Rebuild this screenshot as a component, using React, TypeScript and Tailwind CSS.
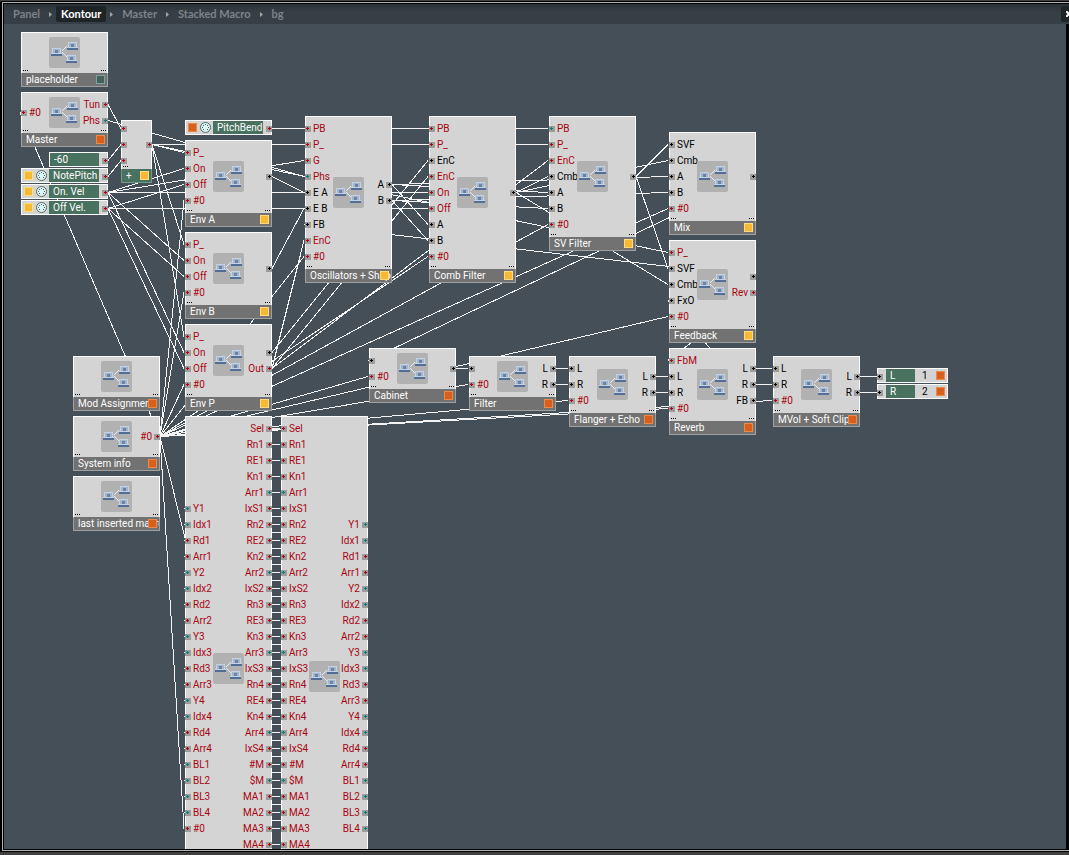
import clsx from "clsx";

type Color = "r" | "k" | "t";
type Side = "in" | "out";

interface Port {
  label: string;
  color: Color;
}

interface Macro {
  id: string;
  title: string;
  x: number;
  y: number;
  body: number;
  lamp: "yellow" | "orange" | "off";
  ins: Port[];
  outs: Port[];
}

interface Terminal {
  id: string;
  label: string;
  x: number;
  y: number;
  lamp?: "yellow" | "orange";
}

// "r:PB k:A t:Phs" -> list of ports, "~" is a blank inside a label
function ports(text: string): Port[] {
  return text
    .split(" ")
    .filter(Boolean)
    .map((item) => {
      const [color, label] = item.split(":");
      return { color: color as Color, label: label.replace("~", " ") };
    });
}

const groups = [1, 2, 3, 4];
const bankLine = "t:BL1 t:BL2 t:BL3 t:BL4";
const rows = groups.map((n) => `t:Y${n} t:Idx${n} r:Rd${n} r:Arr${n}`).join(" ");
const bus =
  "r:Sel " +
  groups.map((n) => `r:Rn${n} r:RE${n} r:Kn${n} t:Arr${n} r:IxS${n}`).join(" ") +
  " r:#M t:$M r:MA1 r:MA2 r:MA3 r:MA4 r: r: r: r:";

const macros: Macro[] = [
  { id: "ph", title: "placeholder", x: 21, y: 32, body: 41, lamp: "off", ins: [], outs: [] },
  { id: "master", title: "Master", x: 21, y: 92, body: 41, lamp: "orange", ins: ports("r:#0"), outs: ports("r:Tun t:Phs") },
  { id: "envA", title: "Env A", x: 185, y: 140, body: 73, lamp: "yellow", ins: ports("r:P_ r:On r:Off r:#0"), outs: ports("k:") },
  { id: "envB", title: "Env B", x: 185, y: 232, body: 73, lamp: "yellow", ins: ports("r:P_ r:On r:Off r:#0"), outs: ports("k:") },
  { id: "envP", title: "Env P", x: 185, y: 324, body: 73, lamp: "yellow", ins: ports("r:P_ r:On r:Off r:#0"), outs: ports("k: r:Out") },
  { id: "osc", title: "Oscillators + Shape", x: 305, y: 116, body: 153, lamp: "yellow", ins: ports("r:PB r:P_ r:G t:Phs k:E~A k:E~B k:FB r:EnC r:#0"), outs: ports("k:A k:B") },
  { id: "comb", title: "Comb Filter", x: 429, y: 116, body: 153, lamp: "yellow", ins: ports("r:PB r:P_ k:EnC r:EnC r:On r:Off k:A k:B r:#0"), outs: ports("k:") },
  { id: "svf", title: "SV Filter", x: 549, y: 116, body: 121, lamp: "yellow", ins: ports("t:PB r:P_ r:EnC k:Cmb k:A k:B r:#0"), outs: ports("k:") },
  { id: "mix", title: "Mix", x: 669, y: 132, body: 89, lamp: "yellow", ins: ports("k:SVF k:Cmb k:A k:B r:#0"), outs: ports("k:") },
  { id: "fb", title: "Feedback", x: 669, y: 240, body: 89, lamp: "yellow", ins: ports("r:P_ k:SVF k:Cmb k:FxO r:#0"), outs: ports("k: r:Rev") },
  { id: "cab", title: "Cabinet", x: 369, y: 348, body: 41, lamp: "orange", ins: ports("k: r:#0"), outs: ports("k:") },
  { id: "filter", title: "Filter", x: 469, y: 356, body: 41, lamp: "orange", ins: ports("k: r:#0"), outs: ports("k:L k:R") },
  { id: "flanger", title: "Flanger + Echo", x: 569, y: 356, body: 57, lamp: "orange", ins: ports("k:L k:R r:#0"), outs: ports("k:L k:R") },
  { id: "reverb", title: "Reverb", x: 669, y: 348, body: 73, lamp: "orange", ins: ports("r:FbM k:L k:R r:#0"), outs: ports("k:L k:R k:FB") },
  { id: "mvol", title: "MVol + Soft Clip", x: 773, y: 356, body: 57, lamp: "orange", ins: ports("k:L k:R r:#0"), outs: ports("k:L k:R") },
  { id: "mod", title: "Mod Assignment", x: 73, y: 356, body: 41, lamp: "orange", ins: [], outs: [] },
  { id: "sys", title: "System info", x: 73, y: 416, body: 41, lamp: "orange", ins: [], outs: ports("r:#0") },
  { id: "last", title: "last inserted macro", x: 73, y: 476, body: 41, lamp: "orange", ins: [], outs: [] },
  { id: "bankA", title: "", x: 185, y: 416, body: 505, lamp: "orange", ins: ports(`${rows} ${bankLine} r:#0`), outs: ports(bus) },
  { id: "bankB", title: "", x: 281, y: 416, body: 521, lamp: "orange", ins: ports(`${bus} r:`), outs: ports(`${rows} ${bankLine}`) },
];

const sources: Terminal[] = [
  { id: "const", label: "-60", x: 49, y: 152 },
  { id: "note", label: "NotePitch", x: 21, y: 168, lamp: "yellow" },
  { id: "on", label: "On. Vel", x: 21, y: 184, lamp: "yellow" },
  { id: "off", label: "Off Vel.", x: 21, y: 200, lamp: "yellow" },
  { id: "bend", label: "PitchBend", x: 185, y: 120, lamp: "orange" },
];

const sinks = [
  { id: "outL", label: "L", channel: 1, x: 877, y: 368 },
  { id: "outR", label: "R", channel: 2, x: 877, y: 384 },
];

// from, output index, to, input index
const wires: [string, number, string, number][] = [
  ["master", 0, "add", 0],
  ["master", 1, "osc", 3],
  ["const", 0, "add", 1],
  ["note", 0, "add", 2],
  ["add", 0, "osc", 1],
  ["add", 0, "comb", 1],
  ["add", 0, "svf", 1],
  ["add", 0, "envA", 0],
  ["add", 0, "envB", 0],
  ["add", 0, "envP", 0],
  ["add", 0, "fb", 0],
  ["on", 0, "envA", 1],
  ["on", 0, "envB", 1],
  ["on", 0, "envP", 1],
  ["on", 0, "osc", 2],
  ["on", 0, "comb", 4],
  ["off", 0, "envA", 2],
  ["off", 0, "envB", 2],
  ["off", 0, "envP", 2],
  ["off", 0, "comb", 5],
  ["bend", 0, "osc", 0],
  ["bend", 0, "comb", 0],
  ["bend", 0, "svf", 0],
  ["envA", 0, "osc", 4],
  ["envB", 0, "osc", 5],
  ["envP", 0, "comb", 2],
  ["envP", 1, "osc", 7],
  ["envP", 1, "comb", 3],
  ["envP", 1, "svf", 2],
  ["osc", 0, "comb", 6],
  ["osc", 0, "svf", 4],
  ["osc", 0, "mix", 2],
  ["osc", 1, "comb", 7],
  ["osc", 1, "svf", 5],
  ["osc", 1, "mix", 3],
  ["comb", 0, "svf", 3],
  ["comb", 0, "mix", 1],
  ["comb", 0, "fb", 2],
  ["svf", 0, "mix", 0],
  ["svf", 0, "fb", 1],
  ["mix", 0, "cab", 0],
  ["fb", 0, "osc", 6],
  ["fb", 1, "reverb", 0],
  ["cab", 0, "filter", 0],
  ["filter", 0, "flanger", 0],
  ["filter", 1, "flanger", 1],
  ["flanger", 0, "reverb", 1],
  ["flanger", 1, "reverb", 2],
  ["reverb", 0, "mvol", 0],
  ["reverb", 1, "mvol", 1],
  ["reverb", 2, "fb", 3],
  ["mvol", 0, "outL", 0],
  ["mvol", 1, "outR", 0],
  ["sys", 0, "master", 0],
  ["sys", 0, "envA", 3],
  ["sys", 0, "envB", 3],
  ["sys", 0, "envP", 3],
  ["sys", 0, "osc", 8],
  ["sys", 0, "comb", 8],
  ["sys", 0, "svf", 6],
  ["sys", 0, "mix", 4],
  ["sys", 0, "fb", 4],
  ["sys", 0, "cab", 1],
  ["sys", 0, "filter", 1],
  ["sys", 0, "flanger", 2],
  ["sys", 0, "reverb", 3],
  ["sys", 0, "mvol", 2],
  ["sys", 0, "bankA", 20],
  ["sys", 0, "bankB", 31],
];

for (let i = 0; i < 31; i++) wires.push(["bankA", i, "bankB", i]);
for (let i = 0; i < 20; i++) wires.push(["bankB", i, "bankA", i]);

const MACRO_WIDTH = 87;

function portPosition(id: string, side: Side, index: number) {
  const macro = macros.find((m) => m.id === id);
  if (macro) {
    const count = side === "in" ? macro.ins.length : macro.outs.length;
    return {
      x: side === "in" ? macro.x - 1 : macro.x + MACRO_WIDTH,
      y: macro.y + macro.body / 2 + (index - (count - 1) / 2) * 16,
    };
  }
  if (id === "add") {
    return side === "in" ? { x: 121, y: 128.5 + index * 16 } : { x: 152, y: 144.5 };
  }
  const source = sources.find((s) => s.id === id);
  if (source) {
    return { x: source.lamp ? source.x + MACRO_WIDTH : 108, y: source.y + 8.5 };
  }
  const sink = sinks.find((s) => s.id === id);
  return { x: sink ? sink.x : 0, y: sink ? sink.y + 8.5 : 0 };
}

function Jack({ color, side }: { color: Color; side: Side }) {
  return (
    <svg
      className={clsx(
        "size-[6px] shrink-0",
        side === "out" && "-scale-x-100",
        color === "r" && "text-[#b4000e]",
        color === "k" && "text-black",
        color === "t" && "text-[#00807c]"
      )}
      viewBox="0 0 6 6"
      aria-hidden="true"
    >
      <rect width="6" height="6" fill="#9c9c9c" />
      <rect x="2" y="1" width="1" height="3" fill="currentColor" />
      <rect x="1" y="2" width="3" height="1" fill="currentColor" />
    </svg>
  );
}

function PortColumn({ items, side }: { items: Port[]; side: Side }) {
  return (
    <ul className={clsx("flex flex-col justify-center", side === "out" && "items-end")}>
      {items.map((port, i) => (
        <li
          key={i}
          className={clsx(
            "flex h-4 items-center gap-[2px] whitespace-nowrap",
            side === "out" && "flex-row-reverse",
            port.color === "k" ? "text-black" : "text-[#a80510]"
          )}
        >
          <Jack color={port.color} side={side} />
          <span>{port.label}</span>
        </li>
      ))}
    </ul>
  );
}

function Lamp({ color }: { color: "yellow" | "orange" | "off" }) {
  return (
    <span
      className={clsx(
        "size-[9px] shrink-0 border",
        color === "yellow" && "border-[#ffdc82] bg-[#f5b935]",
        color === "orange" && "border-[#ea8a4c] bg-[#d85f1c]",
        color === "off" && "border-[#7aa59d] bg-[#47605c]"
      )}
    />
  );
}

function Computer({ x, y }: { x: number; y: number }) {
  return (
    <g transform={`translate(${x} ${y})`}>
      <rect x="1" width="9" height="6" fill="#c3d2e5" />
      <rect x="2" y="1" width="7" height="4" fill="#a3b5cc" />
      <rect x="4" y="2" width="3" height="3" fill="#6c82a2" />
      <rect y="5" width="11" height="1" fill="#c3d2e5" />
      <rect y="6" width="11" height="2" fill="#526d96" />
    </g>
  );
}

function MacroIcon() {
  return (
    <svg className="size-[31px] shrink-0 rounded-xs bg-[#b1b1b1]" viewBox="0 0 31 31" shapeRendering="crispEdges" aria-hidden="true">
      <path d="M13 14L18 9M13 15L18 20" stroke="#ececec" strokeWidth="1" fill="none" />
      <Computer x={2} y={11} />
      <Computer x={18} y={5} />
      <Computer x={17} y={18} />
    </svg>
  );
}

function Dots() {
  return (
    <svg className="h-px w-[5px]" viewBox="0 0 5 1" shapeRendering="crispEdges" aria-hidden="true">
      <path d="M0 0h1v1h-1zM2 0h1v1h-1zM4 0h1v1h-1z" />
    </svg>
  );
}

function Dial() {
  return (
    <svg className="size-[11px] shrink-0" viewBox="0 0 11 11" aria-hidden="true">
      <circle cx="5.5" cy="5.5" r="5" fill="#dcf4f2" stroke="#566a6c" strokeWidth="1" />
      <path d="M2 5h1v1h-1zM8 5h1v1h-1zM3 3h1v1h-1zM7 3h1v1h-1zM5 2h1v1h-1zM3 7h1v1h-1zM7 7h1v1h-1z" fill="#4b6466" />
    </svg>
  );
}

function MacroBox({ macro }: { macro: Macro }) {
  return (
    <article className="absolute w-[87px]" style={{ left: macro.x, top: macro.y }}>
      <div className="relative flex border border-b-0 border-white bg-[#d4d4d4]" style={{ height: macro.body }}>
        <div className="-mx-px flex flex-1 items-center justify-between">
          <PortColumn items={macro.ins} side="in" />
          <PortColumn items={macro.outs} side="out" />
        </div>
        <div className="absolute inset-x-0 -top-px bottom-0 flex items-center justify-center">
          <MacroIcon />
        </div>
        <div className="absolute inset-x-px bottom-[2px] flex justify-between">
          <Dots />
          <Dots />
        </div>
      </div>
      <header className="relative flex h-[14px] items-center overflow-hidden border border-t-0 border-[#a0a0a0] bg-[#727272] pl-1 text-white">
        <h2 className="whitespace-nowrap">{macro.title}</h2>
        <span className="absolute top-[2px] right-[2px] flex">
          <Lamp color={macro.lamp} />
        </span>
      </header>
    </article>
  );
}

function Adder() {
  return (
    <article className="absolute w-[31px]" style={{ left: 121, top: 120 }}>
      <div className="relative flex h-[49px] border border-b-0 border-white bg-[#d4d4d4]">
        <div className="-mx-px flex flex-1 items-center justify-between">
          <PortColumn items={ports("r: r: r:")} side="in" />
          <PortColumn items={ports("r:")} side="out" />
        </div>
        <div className="absolute bottom-[2px] left-px flex">
          <Dots />
        </div>
      </div>
      <header className="flex h-[14px] items-center justify-between border border-t-0 border-[#6f9c86] bg-[#487160] pr-[2px] pl-1 text-white">
        <h2>+</h2>
        <Lamp color="yellow" />
      </header>
    </article>
  );
}

function SourceBox({ source }: { source: Terminal }) {
  return (
    <div
      className="absolute flex h-[15px] items-stretch border border-white bg-[#d4d4d4]"
      style={{ left: source.x, top: source.y }}
    >
      {source.lamp && (
        <div className="flex w-[27px] items-center gap-[3px] pl-[2px]">
          <Lamp color={source.lamp} />
          <Dial />
        </div>
      )}
      <span className={clsx("flex items-center bg-[#487160] pl-1 whitespace-nowrap text-white", source.lamp ? "w-[50px]" : "w-[49px]")}>
        {source.label}
      </span>
      <span className="-mr-px flex w-[9px] items-end justify-end pb-[2px]">
        <Jack color="r" side="out" />
      </span>
    </div>
  );
}

function SinkBox({ label, channel, x, y }: { label: string; channel: number; x: number; y: number }) {
  return (
    <div className="absolute flex h-[15px] w-[71px] items-stretch border border-white bg-[#d4d4d4]" style={{ left: x, top: y }}>
      <span className="-ml-px flex w-[9px] items-end pb-[2px]">
        <Jack color="k" side="in" />
      </span>
      <span className="flex w-[29px] items-center bg-[#487160] pl-1 text-white">{label}</span>
      <span className="flex flex-1 items-center justify-between pr-[2px] pl-[7px] text-black">
        {channel}
        <Lamp color="orange" />
      </span>
    </div>
  );
}

function Wires() {
  return (
    <svg className="absolute top-0 left-0 h-[1000px] w-[1069px]" shapeRendering="crispEdges" aria-hidden="true">
      {wires.map(([from, output, to, input], i) => {
        const a = portPosition(from, "out", output);
        const b = portPosition(to, "in", input);
        return <line key={i} x1={a.x} y1={a.y} x2={b.x} y2={b.y} stroke="#f4f4f4" strokeWidth="1" />;
      })}
    </svg>
  );
}

const crumbs = ["Panel", "Kontour", "Master", "Stacked Macro", "bg"];

function Breadcrumb() {
  return (
    <nav className="flex h-5 shrink-0 items-center justify-between bg-linear-to-b from-[#2b3237] to-[#373f46] to-40% pl-1 font-[Lato,sans-serif] text-[11px] leading-4 font-bold">
      <ol className="flex items-center">
        {crumbs.map((crumb, i) => (
          <li key={crumb} className="flex items-center">
            {i > 0 && (
              <svg className="mx-1 h-[5px] w-[3px]" viewBox="0 0 3 5" aria-hidden="true">
                <path d="M0 0L3 2.5L0 5z" fill="#a3a8ab" />
              </svg>
            )}
            <a
              href="#"
              className={clsx("rounded-xs px-[5px]", crumb === "Kontour" ? "bg-[#1f2427] text-white" : "text-[#7d8388]")}
            >
              {crumb}
            </a>
          </li>
        ))}
      </ol>
      <button type="button" aria-label="Close" className="flex h-4 w-2 items-center overflow-hidden rounded-l-xs bg-[#1f2427] pl-[5px]">
        <svg className="h-[6px] w-[6px] shrink-0" viewBox="0 0 6 6" aria-hidden="true">
          <path d="M0 0L6 6M6 0L0 6" stroke="white" strokeWidth="2" />
        </svg>
      </button>
    </nav>
  );
}

export default function App() {
  return (
    <div className="flex h-screen flex-col overflow-hidden bg-[#414141] pt-px pb-[3px] font-[Roboto,sans-serif] text-[10px] leading-3">
      <div className="flex flex-1 flex-col overflow-hidden rounded-tl-xs border-y border-l-2 border-black">
        <div className="flex flex-1 flex-col overflow-hidden border-y border-l border-[#b4b4b4]">
          <div className="flex flex-1 flex-col overflow-hidden border-y border-l border-black">
            <Breadcrumb />
            <div className="flex flex-1 bg-black pr-[3px]">
              <main className="relative flex-1 overflow-hidden bg-[#454f58]">
                <div className="absolute -top-6 -left-1">
                  <Wires />
                  {macros.map((macro) => (
                    <MacroBox key={macro.id} macro={macro} />
                  ))}
                  <Adder />
                  {sources.map((source) => (
                    <SourceBox key={source.id} source={source} />
                  ))}
                  {sinks.map((sink) => (
                    <SinkBox key={sink.id} label={sink.label} channel={sink.channel} x={sink.x} y={sink.y} />
                  ))}
                </div>
              </main>
            </div>
          </div>
        </div>
      </div>
    </div>
  );
}
